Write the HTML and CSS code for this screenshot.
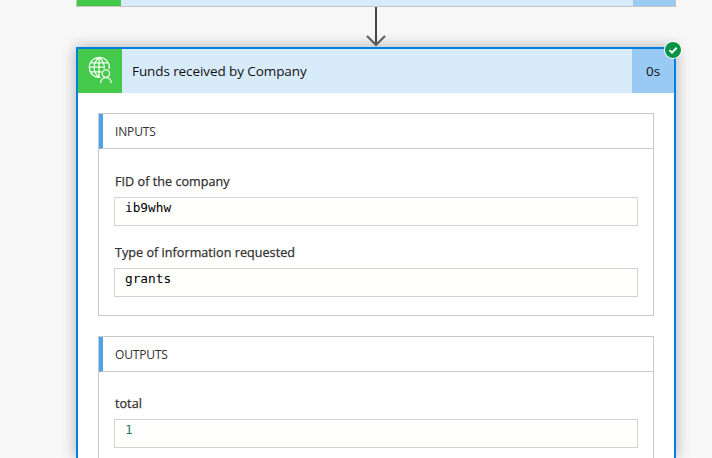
FILE: index.html
```html
<!DOCTYPE html>
<html lang="en">
<head>
<meta charset="utf-8">
<title>Flow run</title>
<link rel="stylesheet" href="styles.css">
</head>
<body>
<main class="flow">
  <div class="previous"><span class="previous-icon"></span><span class="previous-time"></span></div>
  <svg class="arrow" width="24" height="40" viewBox="0 0 24 40" fill="none" stroke="#484644"><path d="M12 0V38" stroke-width="2"/><path d="M3 29L12 38L21 29" stroke="#605e5c" stroke-width="2.2"/></svg>
  <article class="card">
    <svg class="badge" width="18" height="18" viewBox="0 0 18 18"><circle cx="9" cy="9" r="9" fill="#fff"/><circle cx="9" cy="9" r="8" fill="#089447"/><path d="M5.4 9.1L8 11.6L12.7 6.8" fill="none" stroke="#fff" stroke-width="2"/></svg>
    <header class="card-head">
      <span class="card-icon"><svg width="44" height="44" viewBox="0 0 44 44" fill="none" stroke="#f1fff1" stroke-width="1.3"><path d="M22.5 28.3A10 10 0 1 1 31.2 20M21 8.5C14.5 14 14.5 23 21 28.3M21 8.5C24.8 11.5 26.6 15.5 26.3 19.7M21 8.5V28.3M12.5 13.8H29.8M12.2 22.8H23.5M11 18.2H25.5"/><circle cx="27.9" cy="24.6" r="3.7"/><path d="M22.6 34C22.8 26.8 33.1 26.8 33.3 34"/></svg></span>
      <h1 class="title">Funds received by Company</h1>
      <span class="time">0s</span>
    </header>
    <div class="card-body">
      <section class="panel">
        <h2 class="panel-head">INPUTS</h2>
        <div class="fields">
          <div class="field"><h3 class="label">FID of the company</h3><div class="value">ib9whw</div></div>
          <div class="field"><h3 class="label">Type of information requested</h3><div class="value">grants</div></div>
        </div>
      </section>
      <section class="panel">
        <h2 class="panel-head">OUTPUTS</h2>
        <div class="fields outputs">
          <div class="field"><h3 class="label">total</h3><div class="value number">1</div></div>
        </div>
      </section>
    </div>
  </article>
</main>
</body>
</html>
```

FILE: styles.css
```css
* { box-sizing: border-box; }
html, body { height: 100%; overflow: hidden; }
body { margin: 0; background: #f8f8f8; font-family: "Open Sans", "Noto Sans", sans-serif; color: #323130; }
h1, h2, h3 { margin: 0; font-weight: 400; }
.flow { width: 600px; height: 100%; margin-left: 76px; display: flex; flex-direction: column; }
.previous { flex: none; height: 7px; display: flex; justify-content: space-between; background: #d8ebfb; border: 1px solid #c8c6c4; border-top: 0; }
.previous-icon { width: 44px; background: #44c94b; }
.previous-time { width: 42px; background: #98caf4; }
.arrow { flex: none; display: block; align-self: center; position: relative; z-index: 1; }
.card { position: relative; flex: 1; border: 2px solid #0080e3; border-bottom: 0; background: #fff; box-shadow: 0 0 14px rgba(0,0,0,.3); }
.badge { position: absolute; top: -8px; right: -8px; }
.card-head { display: flex; height: 44px; background: #d8ebfb; color: #111; }
.card-icon { width: 44px; background: #44c94b; }
.card-icon svg { display: block; }
.title { flex: 1; padding-left: 10px; font-size: 13.5px; line-height: 44px; letter-spacing: -.09px; }
.time { width: 42px; background: #98caf4; text-align: center; font-size: 13.5px; line-height: 44px; }
.card-body { padding: 20px 20px 0; display: flex; flex-direction: column; gap: 20px; }
.panel { border: 1px solid #c8c8c8; }
.panel:last-child { border-bottom: 0; }
.panel-head { height: 35px; border-left: 4px solid #4da3e9; border-bottom: 1px solid #c8c8c8; padding-left: 12px; font-size: 12px; line-height: 35px; letter-spacing: -.15px; }
.fields { padding: 23px 15px 18px; display: flex; flex-direction: column; gap: 17px; }
.outputs { padding-top: 22px; padding-bottom: 10px; }
.label { height: 25px; padding-left: 1px; font-size: 12.6px; line-height: 20px; letter-spacing: .03px; -webkit-text-stroke: .25px #323130; }
.value { height: 29px; border: 1px solid #d2d2d2; background: #fffffd; padding-left: 10px; font: 12.75px/20px "DejaVu Sans Mono", monospace; color: #000; }
.number { color: #287e65; }
```
